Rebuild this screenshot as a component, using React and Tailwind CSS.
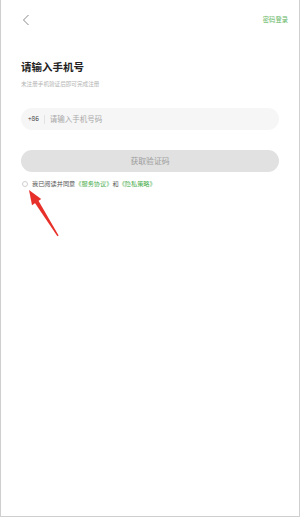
export default function App() {
  return (
    <div
      className="relative h-[517px] w-[300px] overflow-hidden border-x border-b border-[#cfcfcf] bg-white"
      style={{ fontFamily: '"Noto Sans CJK SC", "Noto Sans", sans-serif' }}
    >
      <div className="flex h-[40px] items-center justify-between pl-[21px] pr-[11px]">
        <svg width="8" height="12" viewBox="0 0 8 12" fill="none">
          <path d="M6.5 1 L1.5 6 L6.5 11" stroke="#8a8a8a" strokeWidth="1" />
        </svg>
        <span className="text-[6.3px] leading-none text-[#62b562]">密码登录</span>
      </div>

      <div className="px-[20px] pt-[16px]">
        <h1 className="text-[10.5px] font-bold leading-[22px] text-[#222]">请输入手机号</h1>
        <p className="mt-[1px] text-[5.6px] leading-[10px] text-[#b5b5b5]">未注册手机验证后即可完成注册</p>

        <div className="mt-[19px] flex h-[22px] items-center rounded-full bg-[#f6f6f6] pl-[7px]">
          <span className="text-[6.5px] text-[#444]">+86</span>
          <span className="mx-[5px] h-[9px] w-px bg-[#e2e2e2]" />
          <span className="text-[7.5px] text-[#a8a8a8]">请输入手机号码</span>
        </div>

        <button className="mt-[20px] flex h-[22px] w-full items-center justify-center rounded-full bg-[#e1e1e1] text-[7.8px] text-[#9c9c9c]">
          获取验证码
        </button>

        <div className="mt-[8px] flex items-center">
          <span className="ml-[1px] h-[6px] w-[6px] rounded-full border border-[#cfcfcf]" />
          <span className="ml-[4px] text-[6.2px] leading-[8px] text-[#555]">
            我已阅读并同意<span className="text-[#4caf50]">《服务协议》</span>和<span className="text-[#4caf50]">《隐私策略》</span>
          </span>
        </div>
      </div>

      <svg className="absolute left-0 top-0" width="300" height="517" viewBox="0 0 300 517">
        <path d="M57.6 235.5 L56.4 236.3 L33.6 202.6 L37.2 200.2 Z" fill="#e8302a" />
        <path d="M28 190 L40.2 199 L31 205.2 Z" fill="#e8302a" />
      </svg>
    </div>
  );
}
